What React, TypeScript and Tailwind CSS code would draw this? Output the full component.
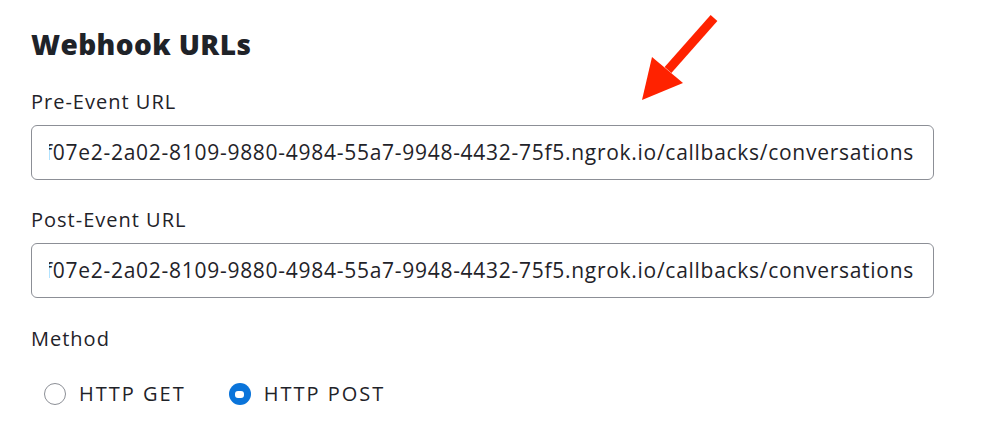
const url =
  'https://3a9f07e2-2a02-8109-9880-4984-55a7-9948-4432-75f5.ngrok.io/callbacks/conversations'

function UrlField({ label }: { label: string }) {
  return (
    <div>
      <div className="text-[20px] leading-[28px] tracking-[1px] text-[#1f2329]">{label}</div>
      <div className="mt-[9px] flex h-[55px] w-[903px] items-center rounded-[6px] border border-[#8c8f96] bg-white pl-[17px] pr-[19px]">
        <div className="flex min-w-0 flex-1 justify-end overflow-hidden">
          <span className="shrink-0 whitespace-nowrap text-[21px] tracking-[0.72px] text-[#1f2329]">{url}</span>
        </div>
      </div>
    </div>
  )
}

function Radio({ label, checked }: { label: string; checked?: boolean }) {
  return (
    <label className="flex items-center gap-[13px]">
      {checked ? (
        <span className="flex h-[22px] w-[22px] items-center justify-center rounded-full bg-[#0a74da]">
          <span className="h-[7px] w-[9px] rounded-[3px] bg-white" />
        </span>
      ) : (
        <span className="h-[22px] w-[22px] rounded-full border-[1.5px] border-[#8c8f96] bg-white" />
      )}
      <span className="text-[20px] tracking-[2px] text-[#1f2329]">{label}</span>
    </label>
  )
}

export default function App() {
  return (
    <div
      className="relative h-[443px] w-[1000px] overflow-hidden bg-white pl-[31px] pt-[24px]"
      style={{ fontFamily: '"Open Sans", "Noto Sans", sans-serif' }}
    >
      <h2 className="text-[28px] font-extrabold leading-[40px] tracking-[0.4px] text-[#1f2329]">Webhook URLs</h2>

      <div className="mt-[24px] flex flex-col gap-[26px]">
        <UrlField label="Pre-Event URL" />
        <UrlField label="Post-Event URL" />
      </div>

      <div className="mt-[27px] text-[20px] leading-[28px] tracking-[1px] text-[#1f2329]">Method</div>
      <div className="mt-[26px] flex items-center gap-[43px] pl-[13px]">
        <Radio label="HTTP GET" />
        <Radio label="HTTP POST" checked />
      </div>

      {/* annotation arrow */}
      <svg className="absolute left-0 top-0" width="1000" height="443" viewBox="0 0 1000 443">
        <line x1="714" y1="18" x2="668" y2="70" stroke="#ff2200" strokeWidth="9" />
        <polygon points="652,57 683,83 642,100" fill="#ff2200" />
      </svg>
    </div>
  )
}
